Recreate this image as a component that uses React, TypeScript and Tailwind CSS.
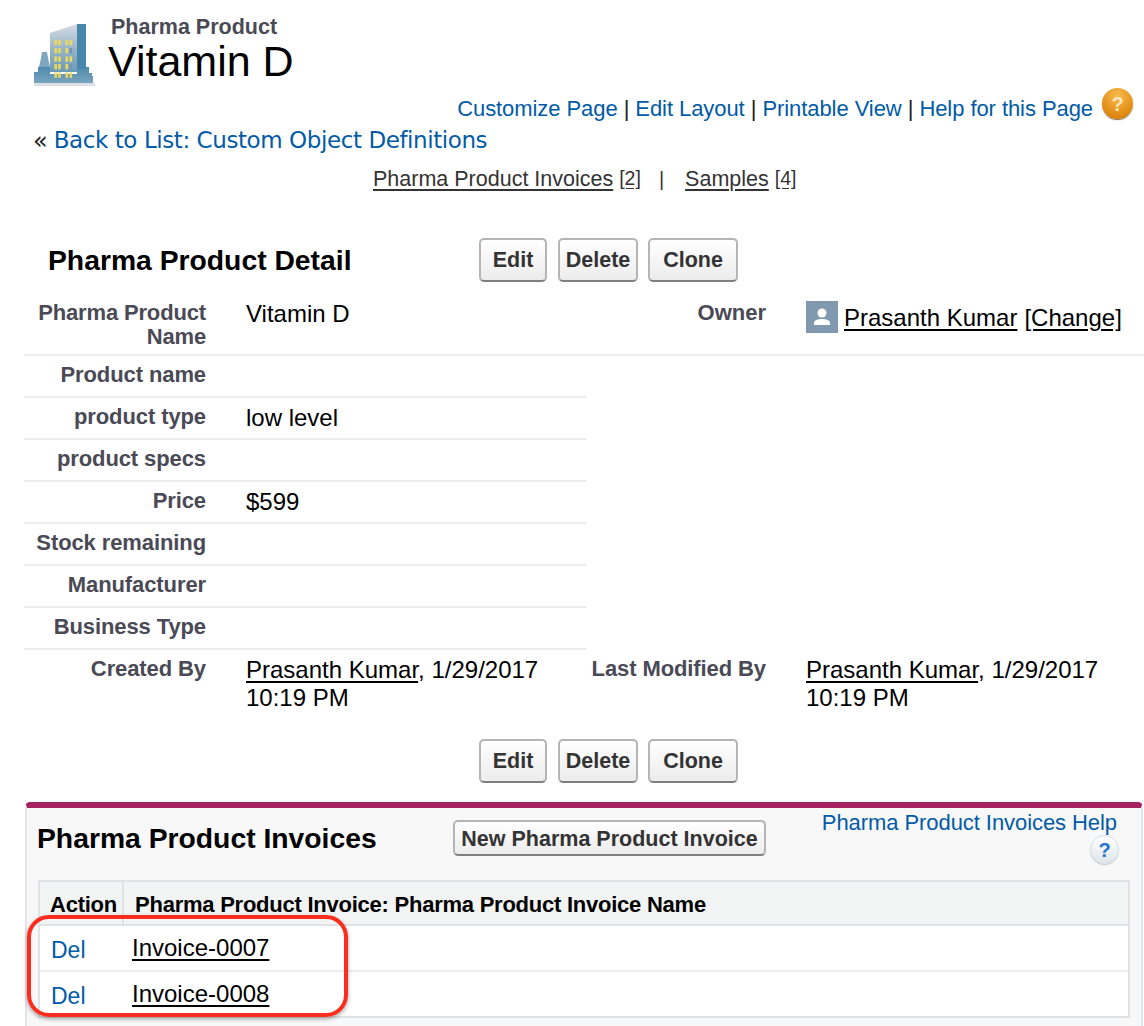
import React from 'react';

const font = { fontFamily: '"Liberation Sans", Arial, sans-serif' };

function BuildingIcon() {
  const cols = [21.4, 25.1, 32.5, 36.5];
  const ys = [18, 26, 34.4, 42, 50.4];
  return (
    <svg width="66" height="66" viewBox="0 0 66 66" className="shrink-0">
      <defs>
        <linearGradient id="tower" x1="0" y1="0" x2="0" y2="1">
          <stop offset="0" stopColor="#d6dce2" />
          <stop offset="0.5" stopColor="#9ab6c9" />
          <stop offset="1" stopColor="#6a9ab7" />
        </linearGradient>
        <linearGradient id="base" x1="0" y1="0" x2="0" y2="1">
          <stop offset="0" stopColor="#4f8aad" />
          <stop offset="1" stopColor="#78a4bf" />
        </linearGradient>
        <filter id="soft">
          <feGaussianBlur stdDeviation="0.35" />
        </filter>
      </defs>
      <g filter="url(#soft)">
        <rect x="1" y="61" width="61" height="3" fill="#d5dade" opacity="0.8" />
        <path d="M17 11 L44 2 L44 50 L17 50 Z" fill="url(#tower)" />
        <rect x="44" y="2" width="9" height="48" fill="#4a87aa" />
        <path d="M6 45 L8 36 L9 30 L14 30 L15 36 L17 45 Z" fill="#7fa6bf" />
        <path d="M1 61 L1 50 L5 50 L5 45 L17 45 L17 52 L44 52 L44 47 L53 47 L53 45 L56 45 L56 51 L59 51 L59 54 L60 54 L60 61 Z" fill="url(#base)" />
        {ys.map((y, r) => (
          <g key={r}>
            {cols.map((x, c) => (
              <rect
                key={c}
                x={x}
                y={y}
                width="2.6"
                height="5.4"
                fill={(r === 1 && c === 3) || (r === 3 && c === 3) ? '#7096b2' : '#ecd75e'}
              />
            ))}
          </g>
        ))}
      </g>
    </svg>
  );
}

function OrangeHelp() {
  return (
    <span
      className="flex h-[31px] w-[31px] shrink-0 items-center justify-center rounded-full bg-[radial-gradient(circle_at_50%_25%,#f7bb4e,#e08a12_70%,#b86f10)] text-[20px] font-bold text-[#fbe6bd] shadow-[0_1px_1px_#8a6a3a]"
      style={font}
    >
      ?
    </span>
  );
}

function Btn({ label, w }: { label: string; w: string }) {
  return (
    <button
      className={`${w} h-[44px] rounded-[5px] border-2 border-[#b5b5b5] border-b-[#7f7f7f] bg-gradient-to-b from-white to-[#ececec] pt-[1px] text-center text-[21.5px] font-bold text-[#333]`}
    >
      {label}
    </button>
  );
}

function ButtonRow() {
  return (
    <div className="flex">
      <Btn label="Edit" w="w-[68px]" />
      <Btn label="Delete" w="ml-[11px] w-[80px]" />
      <Btn label="Clone" w="ml-[10px] w-[90px]" />
    </div>
  );
}

function Row({ label, value }: { label: string; value?: string }) {
  return (
    <div className="flex h-[42px] w-[562px] border-b-2 border-[#ececec] leading-[26px]">
      <div className="w-[182px] pt-[6px] text-right text-[22px] font-bold tracking-[-0.1px] text-[#4a4a56]">{label}</div>
      <div className="pl-[40px] pt-[7px] text-[24px] text-black">{value}</div>
    </div>
  );
}

export default function App() {
  const rows: [string, string?][] = [
    ['Product name'],
    ['product type', 'low level'],
    ['product specs'],
    ['Price', '$599'],
    ['Stock remaining'],
    ['Manufacturer'],
    ['Business Type'],
  ];

  return (
    <div className="relative h-[1026px] w-[1144px] overflow-hidden bg-white" style={font}>
      {/* Header */}
      <div className="flex h-[86px] items-start pl-[33px] pt-[22px]">
        <BuildingIcon />
        <div className="ml-[9px] mt-[-8px]">
          <div className="pl-[3px] text-[21.5px] font-bold leading-[26px] text-[#4a4a56]">Pharma Product</div>
          <div className="mt-[-1px] text-[43px] leading-[44px] text-black">Vitamin D</div>
        </div>
      </div>

      {/* Page links */}
      <div className="flex h-[36px] items-start justify-end pr-[11px] text-[22px] leading-[26px] text-[#015ba7]">
        <span className="pt-[10px] tracking-[-0.07px]">
          Customize Page <span className="text-[#222]">|</span> Edit Layout <span className="text-[#222]">|</span> Printable View <span className="text-[#222]">|</span> Help for this Page
        </span>
        <span className="ml-[9px] mt-[2px]">
          <OrangeHelp />
        </span>
      </div>

      <div className="flex h-[36px] items-center pl-[33px] pt-[1px]" style={{ fontFamily: '"DejaVu Sans", Verdana, sans-serif' }}>
        <span className="text-[24px] leading-none text-[#222]">«</span>
        <span className="ml-[6px] text-[23px] tracking-[-0.42px] text-[#015ba7]">Back to List: Custom Object Definitions</span>
      </div>

      {/* Related list links */}
      <div className="flex h-[40px] items-center pl-[373px] pt-[2px] text-[#333]">
        <span className="text-[21.5px] underline underline-offset-[3px]">Pharma Product Invoices</span>
        <span className="ml-[6px] text-[19.5px] underline underline-offset-[3px]">[2]</span>
        <span className="ml-[18px] text-[20px]">|</span>
        <span className="ml-[21px] text-[21.5px] underline underline-offset-[3px]">Samples</span>
        <span className="ml-[6px] text-[19.5px] underline underline-offset-[3px]">[4]</span>
      </div>

      {/* Detail header */}
      <div className="mt-[40px] flex items-start pl-[48px]">
        <h2 className="h-[44px] w-[431px] text-[28.3px] font-bold leading-[44px] text-black">Pharma Product Detail</h2>
        <ButtonRow />
      </div>

      {/* Detail table */}
      <div className="mt-[15px] pl-[24px]">
        <div className="flex h-[59px] w-[1120px] border-b-2 border-[#ececec]">
          <div className="w-[182px] pt-[4px] text-right text-[22px] font-bold leading-[24px] tracking-[-0.15px] text-[#4a4a56]">Pharma Product Name</div>
          <div className="w-[378px] pl-[40px] pt-[4px] text-[24px] leading-[26px] text-black">Vitamin D</div>
          <div className="w-[182px] pt-[4px] text-right text-[22px] font-bold leading-[24px] text-[#4a4a56]">Owner</div>
          <div className="flex items-start pl-[40px] pt-[4px] text-[24px] leading-[26px] text-black">
            <span className="flex h-[32px] w-[32px] items-center justify-center bg-[#8199af]">
              <svg width="22" height="22" viewBox="0 0 22 22" fill="#fff">
                <circle cx="11" cy="7" r="4.5" />
                <path d="M3 19 v-2 c0-3 4-4 8-4 s8 1 8 4 v2 Z" />
              </svg>
            </span>
            <span className="ml-[6px] mt-[4px] whitespace-nowrap underline underline-offset-[3px]">Prasanth Kumar</span>
            <span className="ml-[7px] mt-[4px] whitespace-nowrap underline underline-offset-[3px]">[Change]</span>
          </div>
        </div>
        {rows.map(([label, value]) => (
          <Row key={label} label={label} value={value} />
        ))}
        <div className="flex h-[72px] pt-[6px]">
          <div className="w-[182px] text-right text-[22px] font-bold leading-[26px] tracking-[-0.1px] text-[#4a4a56]">Created By</div>
          <div className="w-[378px] pl-[40px] text-[24px] leading-[28px] text-black">
            <span className="underline underline-offset-[3px]">Prasanth Kumar</span>, 1/29/2017<br />10:19 PM
          </div>
          <div className="w-[182px] whitespace-nowrap text-right text-[22px] font-bold leading-[26px] tracking-[-0.1px] text-[#4a4a56]">Last Modified By</div>
          <div className="pl-[40px] text-[24px] leading-[28px] text-black">
            <span className="underline underline-offset-[3px]">Prasanth Kumar</span>, 1/29/2017<br />10:19 PM
          </div>
        </div>
      </div>

      <div className="mt-[17px] flex pl-[479px]">
        <ButtonRow />
      </div>

      {/* Related list panel */}
      <div className="ml-[25px] mt-[19px] w-[1118px] rounded-t-[5px] border-x-2 border-t-[6px] border-x-[#e3e6e8] border-t-[#a52262] bg-[#f8f8f8] pb-[8px]">
        <div className="flex h-[72px] items-start">
          <h3 className="ml-[10px] mt-[14px] w-[416px] text-[28.3px] font-bold leading-[32px] text-black">Pharma Product Invoices</h3>
          <button className="mt-[12px] h-[36px] w-[313px] rounded-[5px] border-2 border-[#b5b5b5] border-b-[#7f7f7f] bg-gradient-to-b from-white to-[#ececec] pt-[1px] text-[21.5px] font-bold text-[#333]">
            New Pharma Product Invoice
          </button>
          <div className="ml-[56px] flex w-[295px] flex-col items-end">
            <span className="mt-[2px] whitespace-nowrap text-[22px] leading-[26px] tracking-[-0.07px] text-[#015ba7]">Pharma Product Invoices Help</span>
            <span className="mr-[-2px] mt-[-1px] flex h-[29px] w-[29px] items-center justify-center rounded-full border border-[#d4dde4] bg-gradient-to-b from-white to-[#dfe6ea] text-[20px] font-bold leading-none text-[#2a73c9] shadow-[0_1px_1px_#c3c9ce]">
              ?
            </span>
          </div>
        </div>
        <div className="ml-[11px] w-[1092px] border-2 border-[#e0e3e5] bg-white">
          <div className="flex h-[44px] border-b-2 border-[#e0e3e5] bg-[#f2f3f3] text-[22px] font-bold tracking-[-0.24px] text-black">
            <div className="flex w-[84px] items-center justify-end border-r-2 border-[#e0e3e5] pr-[5px] pt-[2px]">Action</div>
            <div className="flex items-center pl-[11px] pt-[2px]">Pharma Product Invoice: Pharma Product Invoice Name</div>
          </div>
          {['Invoice-0007', 'Invoice-0008'].map((name, i) => (
            <div key={name} className={`flex ${i === 0 ? 'h-[46px] border-b-2 border-[#ececec]' : 'h-[44px]'}`}>
              <div className="w-[92px] pl-[11px] pt-[10px] text-[23px] leading-[28px] text-[#015ba7]">Del</div>
              <div className="pt-[8px] text-[24px] leading-[28px] text-black underline underline-offset-[3px]">{name}</div>
            </div>
          ))}
        </div>
      </div>

      {/* Red annotation over the first rows */}
      <div className="absolute left-[27px] top-[915px] h-[102px] w-[321px] rounded-[22px] border-[4px] border-[#fb2d1d] shadow-[0_2px_4px_rgba(0,0,0,0.35)]" />
    </div>
  );
}
